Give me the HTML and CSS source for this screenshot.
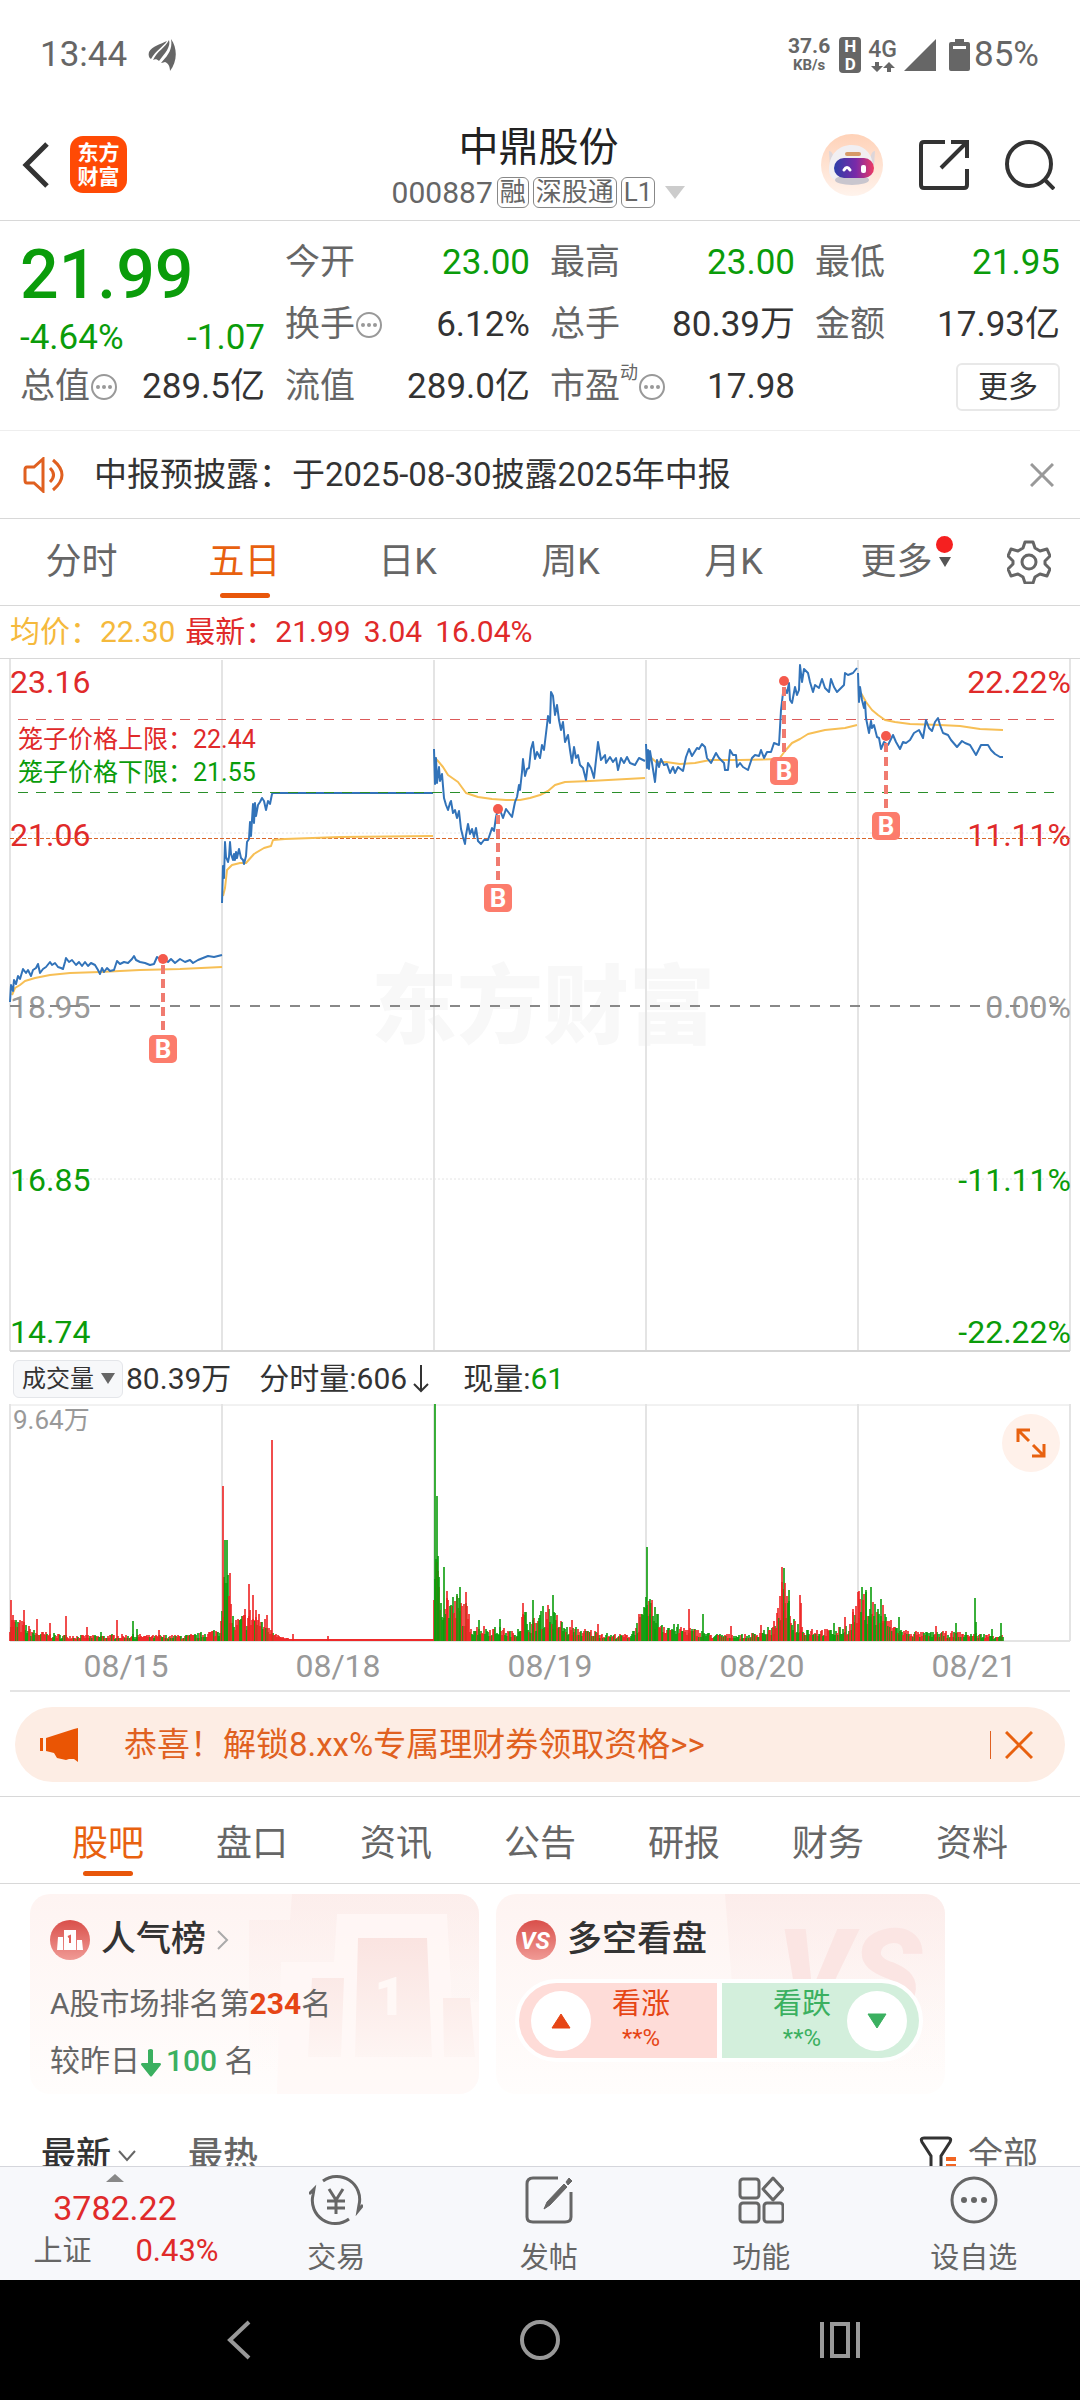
FILE: index.html
```html
<!DOCTYPE html>
<html lang="zh-CN">

<head>
    <meta charset="UTF-8">
    <meta name="viewport" content="width=device-width, initial-scale=1.0">
    <title>中鼎股份 000887</title>
    <link rel="stylesheet" href="styles.css">
</head>

<body>
    <div class="status-bar">
        <span class="clock">13:44</span>
        <svg class="status-leaf" width="30" height="34" viewBox="0 0 30 34" fill="#666">
            <path d="M2 14C5 8 14 6 20 3c-4 6-11 9-16 18C2 20 1 17 2 14z" />
            <path d="M22 2c2 7-4 13-10 21-2-2-4-2-6-1C10 13 18 10 22 2z" />
            <path d="M24 1c7 10 6 23-1 32 0-5-2-8-5-9-1 0-2 1-4 1C20 18 26 12 24 1z" />
        </svg>
        <div class="status-right">
            <div class="net-speed"><b>37.6</b><small>KB/s</small></div>
            <div class="hd"><span>H</span><span>D</span></div>
            <div class="network">
                <span>4G</span>
                <svg width="24" height="10" viewBox="0 0 24 10" fill="#666">
                    <path d="M4 0h4v4h4L6 10 0 4h4zM16 10h4V6h4l-6-6-6 6h4z" />
                </svg>
            </div>
            <svg width="32" height="32" viewBox="0 0 32 32"><path d="M32 0v32H0z" fill="#666" /></svg>
            <svg class="battery" width="21" height="32" viewBox="0 0 21 32">
                <path d="M6 0h9v3h4q2 0 2 2v25q0 2-2 2H2q-2 0-2-2V5q0-2 2-2h4z" fill="#666" />
                <path d="M4 7h13v3H4z" fill="#fff" />
            </svg>
            <span class="percent">85%</span>
        </div>
    </div>

    <header class="header">
        <div class="header-left">
            <button type="button" aria-label="返回">
                <svg width="28" height="46" viewBox="0 0 28 46" fill="none" stroke="#333" stroke-width="5">
                    <path d="M25 2L4 23l21 21" />
                </svg>
            </button>
            <a class="logo" href="#">东方<br>财富</a>
        </div>
        <div class="header-title">
            <h1>中鼎股份</h1>
            <div class="code">
                <span>000887</span><i>融</i><i>深股通</i><i>L1</i>
                <svg width="20" height="13" viewBox="0 0 20 13"><path d="M0 0h20L10 13z" fill="#ccc" /></svg>
            </div>
        </div>
        <div class="header-right">
            <button type="button" aria-label="智能助手">
                <svg width="62" height="62" viewBox="0 0 62 62">
                    <defs>
                        <linearGradient id="halo" x1="0" y1="0" x2="0" y2="1">
                            <stop offset="0" stop-color="#ffd2b8" />
                            <stop offset="1" stop-color="#fff3ec" />
                        </linearGradient>
                        <linearGradient id="visor">
                            <stop offset="0" stop-color="#2b3fa8" />
                            <stop offset=".55" stop-color="#7a2aa8" />
                            <stop offset="1" stop-color="#ee3a63" />
                        </linearGradient>
                    </defs>
                    <circle cx="31" cy="31" r="31" fill="url(#halo)" />
                    <path d="M8 17q4 0 5 9l-4 6zM54 17q-4 0-5 9l4 6z" fill="#ddd6da" />
                    <path d="M31 11c14 0 22 11 21 25 0 8-9 14-21 14S8 46 8 36c0-15 9-25 23-25z" fill="#f1eff2" />
                    <ellipse cx="31" cy="46" rx="17" ry="5" fill="#c9c6ce" />
                    <rect x="24" y="18" width="16" height="4" rx="2" fill="#d79a68" />
                    <rect x="13" y="24" width="40" height="20" rx="10" fill="url(#visor)" />
                    <path d="M23 36q3-5 6 0" fill="none" stroke="#fff" stroke-width="3" stroke-linecap="round" />
                    <rect x="40" y="31" width="5" height="8" rx="2" fill="#fff" />
                </svg>
            </button>
            <button type="button" aria-label="分享">
                <svg width="50" height="50" viewBox="0 0 50 50" fill="none" stroke="#333" stroke-width="4">
                    <path d="M26 2H5Q2 2 2 5v40q0 3 3 3h40q3 0 3-3V29M32 2h16v16M47 3L22 28" />
                </svg>
            </button>
            <button type="button" aria-label="搜索">
                <svg width="50" height="50" viewBox="0 0 50 50" fill="none" stroke="#333" stroke-width="4">
                    <circle cx="24" cy="24" r="22" />
                    <path d="M39 39l10 10" />
                </svg>
            </button>
        </div>
    </header>

    <section class="quote">
        <div class="price-block">
            <div class="price">21.99</div>
            <div class="change"><span>-4.64%</span><span>-1.07</span></div>
        </div>
        <div class="cell"><span>今开</span><b class="down">23.00</b></div>
        <div class="cell"><span>最高</span><b class="down">23.00</b></div>
        <div class="cell"><span>最低</span><b class="down">21.95</b></div>
        <div class="cell"><span>换手<svg class="tip" viewBox="0 0 28 28"><use href="#tip" /></svg></span><b>6.12%</b></div>
        <div class="cell"><span>总手</span><b>80.39万</b></div>
        <div class="cell"><span>金额</span><b>17.93亿</b></div>
        <div class="cell"><span>总值<svg class="tip" viewBox="0 0 28 28"><use href="#tip" /></svg></span><b>289.5亿</b></div>
        <div class="cell"><span>流值</span><b>289.0亿</b></div>
        <div class="cell"><span>市盈<sup>动</sup><svg class="tip" viewBox="0 0 28 28"><use href="#tip" /></svg></span><b>17.98</b></div>
        <div class="cell cell-more"><button type="button" class="more">更多</button></div>
    </section>

    <section class="notice">
        <svg width="46" height="36" viewBox="0 0 46 36" fill="none" stroke="#e06020" stroke-width="3">
            <path d="M20 2v32l-9-8H4q-2 0-2-3V13q0-3 2-3h7zM27 11q7 7 0 14M30 3q18 15 0 30" />
        </svg>
        <p>中报预披露：于2025-08-30披露2025年中报</p>
        <button type="button" aria-label="关闭">
            <svg width="24" height="24" viewBox="0 0 24 24" stroke="#999" stroke-width="3"><path d="M1 1l22 22M23 1L1 23" /></svg>
        </button>
    </section>

    <nav class="period-tabs">
        <button type="button">分时</button>
        <button type="button" class="active">五日</button>
        <button type="button">日K</button>
        <button type="button">周K</button>
        <button type="button">月K</button>
        <button type="button" class="tab-more">更多<svg width="14" height="10" viewBox="0 0 14 10"><path d="M1 0h12L7 10z" fill="#555" /></svg><span class="dot"></span></button>
        <button type="button" class="tab-setting" aria-label="设置">
            <svg width="44" height="44" viewBox="0 0 44 44" fill="none" stroke="#666" stroke-width="3" stroke-linejoin="round">
                <path d="M18 2h8l2 6 5 3 7-2 3 7-5 5v3l5 5-3 7-7-2-5 3-2 6h-8l-2-6-5-3-7 2-3-7 5-5v-3l-5-5 3-7 7 2 5-3z" />
                <circle cx="22" cy="22" r="7" />
            </svg>
        </button>
    </nav>

    <div class="legend">
        <span class="avg">均价：22.30</span>
        <span>最新：21.99</span>
        <span class="legend-num">3.04</span>
        <span class="legend-num">16.04%</span>
    </div>

    <svg class="chart" viewBox="0 0 1080 694">
        <text class="watermark" x="543" y="378" text-anchor="middle">东方财富</text>
        <!-- 网格 -->
        <g class="grid">
            <path d="M10 0V692M222 1V692M434 1V692M646 1V692M858 1V692M1070 0V692" />
            <path d="M10 692H1070" stroke="#d5d5d5" />
            <path d="M10 174H1070M10 520H1070" stroke-width="1" stroke-dasharray="2 2" />
        </g>
        <text class="up" x="10" y="34">23.16</text>
        <text class="up" x="10" y="187">21.06</text>
        <text class="flat" x="10" y="359">18.95</text>
        <text class="down" x="10" y="532">16.85</text>
        <text class="down" x="10" y="684">14.74</text>
        <g text-anchor="end">
            <text class="up" x="1071" y="34">22.22%</text>
            <text class="up" x="1071" y="187">11.11%</text>
            <text class="flat" x="1071" y="359">0.00%</text>
            <text class="down" x="1071" y="532">-11.11%</text>
            <text class="down" x="1071" y="684">-22.22%</text>
        </g>
        <path d="M10 347H1070" stroke="#888" stroke-width="2" stroke-dasharray="10 10" />
        <path d="M10 179.5H1070" stroke="#d9662a" stroke-width="1" stroke-dasharray="4 2" />
        <path d="M18 60.5H1054" stroke="#dc5a5a" stroke-width="1" stroke-dasharray="10 8" />
        <text class="cage up" x="18" y="89">笼子价格上限：22.44</text>
        <text class="cage down" x="18" y="122">笼子价格下限：21.55</text>

        <!-- 均价线 -->
        <g class="line line-avg">
            <polyline points="12,336 15,329 20,326 25,322 35,319 50,316 70,314 100,313 140,311 180,310 222,308" />
            <polyline points="223,237 225,229 227,211 232,206 240,204 246,204 254,195 264,189 271,187 273,181 285,180 340,178 433,177" />
            <polyline points="434,98 438,102 443,108 448,116 458,123 466,134 478,138 492,140 506,141 520,141 530,139 540,136 548,132 555,126 565,123 590,122 645,119" />
            <polyline points="648,96 656,103 666,103 680,105 695,104 710,101 740,101 779,100 785,92 792,84 800,80 808,75 825,71 845,69 857,66" />
            <polyline points="861,34 866,43 872,51 878,56 885,61 895,63 910,65 940,66 960,67 980,70 1003,71" />
        </g>
        <!-- 价格线 -->
        <g class="line line-price">
            <polyline points="10,343 11,326 13,332 14,321 16,325 18,317 20,320 23,310 26,314 28,311 31,317 33,311 36,309 38,305 40,314 43,310 46,308 50,303 52,306 55,304 58,308 61,309 63,310 65,303 66,299 69,303 72,301 76,306 79,303 82,307 85,303 88,307 91,304 95,306 98,311 100,315 102,309 104,313 107,309 110,312 114,311 117,302 120,305 124,303 128,304 132,300 134,297 136,301 140,303 145,304 150,306 154,305 157,298 160,300 163,300 168,303 171,300 175,304 180,300 185,303 190,301 193,304 198,301 203,299 208,297 214,298 222,296" />
            <polyline points="222,244 223,207 224,219 225,183 226,198 228,203 229,198 230,183 231,195 233,201 234,195 235,201 236,193 237,199 239,190 241,199 243,201 244,205 246,197 247,183 249,180 250,163 251,177 253,145 254,164 255,144 256,157 258,146 260,143 262,139 264,142 266,151 268,142 270,145 272,135 273,134 433,134" />
            <polyline points="434,90 435,125 436,99 437,124 439,108 440,122 442,115 444,139 446,146 448,151 450,144 451,142 453,154 455,151 457,159 459,152 461,170 463,178 465,185 466,176 468,165 470,175 472,170 474,178 476,169 478,182 481,185 484,181 488,181 490,175 492,169 494,172 496,158 498,150 500,151 503,159 506,150 509,154 512,158 515,143 517,138 519,126 520,131 522,113 523,100 525,117 527,110 529,109 531,90 533,83 535,100 537,93 540,99 542,86 544,91 547,66 548,57 550,64 551,33 553,37 555,56 557,46 559,61 561,71 563,63 565,83 568,76 570,91 572,104 574,88 576,99 578,96 580,106 583,109 586,121 588,104 591,109 594,119 596,101 598,83 601,101 605,96 606,104 610,98 613,103 616,99 618,111 621,99 624,104 627,98 630,104 635,106 639,99 645,102" />
            <polyline points="646,85 647,109 648,91 649,110 650,92 652,104 655,123 657,101 659,108 661,100 664,106 667,105 670,114 673,108 675,114 678,108 683,112 686,98 689,90 692,97 697,89 699,90 702,85 705,88 707,99 711,104 716,94 719,99 724,104 725,111 728,111 730,91 733,96 736,96 737,108 740,104 743,108 748,111 752,99 755,96 759,97 761,91 764,99 767,93 771,93 774,84 779,86 781,51 783,34 785,30 787,34 789,24 790,41 792,44 795,28 797,36 799,31 800,6 802,23 804,10 808,14 810,23 813,33 815,26 819,29 822,20 825,29 829,33 831,20 834,28 837,33 841,29 844,26 845,14 848,16 853,14 857,9" />
            <polyline points="858,14 859,43 860,28 862,41 864,49 865,43 866,59 869,74 871,62 872,69 874,66 877,78 879,79 881,90 884,83 888,86 893,76 896,83 900,90 903,83 906,84 910,81 914,74 919,71 923,79 926,61 929,69 932,72 935,63 938,59 940,66 943,74 948,76 951,81 957,88 962,82 965,84 970,86 976,96 981,86 988,86 991,91 995,95 1000,98 1003,98" />
        </g>
        <path d="M18 133.5H1054" stroke="#2a8f2a" stroke-width="1" stroke-dasharray="10 8" />

        <!-- 买点 -->
        <g class="buy">
            <path d="M163 306V376M498 156V225M784 28V98M886 84V153" />
            <circle cx="163" cy="300" r="5" />
            <circle cx="498" cy="150" r="5" />
            <circle cx="784" cy="22" r="5" />
            <circle cx="886" cy="77" r="5" />
            <rect x="149" y="376" width="28" height="28" rx="5" />
            <rect x="484" y="225" width="28" height="28" rx="5" />
            <rect x="770" y="98" width="28" height="28" rx="5" />
            <rect x="872" y="153" width="28" height="28" rx="5" />
            <text x="163" y="399">B</text>
            <text x="498" y="248">B</text>
            <text x="784" y="121">B</text>
            <text x="886" y="176">B</text>
        </g>
    </svg>

    <div class="volume-head">
        <button type="button">成交量<svg width="14" height="11" viewBox="0 0 14 11"><path d="M0 0h14L7 11z" fill="#666" /></svg></button>
        <span>80.39万</span>
        <span class="volume-item">分时量:606<svg width="18" height="28" viewBox="0 0 18 28" fill="none" stroke="#333" stroke-width="2"><path d="M9 0v26M2 19l7 7 7-7" /></svg></span>
        <span class="volume-item">现量:<b class="down">61</b></span>
    </div>

    <div class="volume-wrap">
        <svg class="chart" viewBox="0 0 1080 238">
            <g class="grid">
                <path d="M10 0V237M222 0V237M434 0V237M646 0V237M858 0V237M1070 0V237M10 237H1070" />
                <path d="M10 1H1070" stroke-width="1" />
            </g>
            <text class="volume-max" x="13" y="25">9.64万</text>
            <g id="bars"></g>
        </svg>
        <button type="button" class="expand" aria-label="放大">
            <svg width="30" height="30" viewBox="0 0 30 30" fill="none" stroke="#e8610f" stroke-width="3">
                <path d="M2 14V2h12M2 2l11 11M28 16v12H16M28 28L17 17" />
            </svg>
        </button>
    </div>
    <div class="dates"><span>08/15</span><span>08/18</span><span>08/19</span><span>08/20</span><span>08/21</span></div>
    <hr class="divider">

    <div class="banner">
        <svg width="40" height="34" viewBox="0 0 40 34" fill="#ea5504">
            <path d="M0 10h3v13H0zM6 10L34 1l4-1v34l-4-3h-5l-3 1-9-2-3-5-8-2z" />
        </svg>
        <a href="#">恭喜！解锁8.xx%专属理财券领取资格&gt;&gt;</a>
        <button type="button" aria-label="关闭">
            <svg width="28" height="28" viewBox="0 0 28 28" stroke="#e8610f" stroke-width="3"><path d="M1 1l26 26M27 1L1 27" /></svg>
        </button>
    </div>

    <nav class="info-tabs">
        <button type="button" class="active">股吧</button>
        <button type="button">盘口</button>
        <button type="button">资讯</button>
        <button type="button">公告</button>
        <button type="button">研报</button>
        <button type="button">财务</button>
        <button type="button">资料</button>
    </nav>

    <section class="cards">
        <article class="card">
            <svg class="card-bg" width="230" height="200" viewBox="0 0 230 200">
                <defs>
                    <linearGradient id="fade" x1="0" y1="0" x2="0" y2="200" gradientUnits="userSpaceOnUse">
                        <stop offset="0" stop-color="#fbe9e7" />
                        <stop offset=".9" stop-color="#fdf4f2" stop-opacity="0" />
                    </linearGradient>
                    <linearGradient id="podium" x1="0" y1="40" x2="0" y2="170" gradientUnits="userSpaceOnUse">
                        <stop offset="0" stop-color="#fae3e0" />
                        <stop offset="1" stop-color="#fef6f4" />
                    </linearGradient>
                    <linearGradient id="badge" x1="0" y1="0" x2="0" y2="1">
                        <stop offset="0" stop-color="#d94f4a" />
                        <stop offset="1" stop-color="#f09a95" />
                    </linearGradient>
                </defs>
                <path d="M0 26h41L43 0h187v180H0z" fill="url(#fade)" opacity=".6" />
                <path d="M32 68h53l3-48h110l5 88h27v92H28z" fill="#fff8f6" opacity=".8" />
                <path d="M63 84h32l-3 79H59zM109 44h69l5 119h-77zM194 104h27l5 59h-31z" fill="url(#podium)" />
                <text x="141" y="121">1</text>
            </svg>
            <h2>
                <svg width="40" height="40" viewBox="0 0 40 40">
                    <circle cx="20" cy="20" r="20" fill="url(#badge)" />
                    <path d="M8 17h5v13H7zM14 10h12v20H14zM27 20h5l1 10h-6z" fill="#fff" />
                    <path d="M18 17l2-1v7" stroke="#df5f58" stroke-width="2" fill="none" />
                </svg>
                人气榜
                <svg width="12" height="20" viewBox="0 0 12 20" fill="none" stroke="#aaa" stroke-width="2"><path d="M1 1l9 9-9 9" /></svg>
            </h2>
            <p>A股市场排名第<b class="hot">234</b>名</p>
            <p>较昨日<svg class="fall" width="22" height="28" viewBox="0 0 22 28" fill="#3bb060"><path d="M8 1q3-2 5 0v13h7q2 1 0 3l-8 10q-1 1-2 0L2 17q-2-2 0-3h6z" /></svg><b class="rank-down">100</b> 名</p>
        </article>
        <article class="card">
            <svg class="card-bg" width="220" height="200" viewBox="0 0 220 200">
                <path d="M0 0h220v180H14z" fill="url(#fade)" opacity=".7" />
                <text class="vs-bg" x="52" y="118">VS</text>
            </svg>
            <h2>
                <svg width="40" height="40" viewBox="0 0 40 40">
                    <circle cx="20" cy="20" r="20" fill="url(#badge)" />
                    <text class="vs" x="19" y="29">VS</text>
                </svg>
                多空看盘
            </h2>
            <div class="vote">
                <button type="button" class="vote-up">
                    <span class="knob"><svg width="20" height="16" viewBox="0 0 20 16"><path d="M10 1l9 14H1z" fill="#e64515" stroke="#e64515" stroke-linejoin="round" /></svg></span>
                    <span>看涨<small>**%</small></span>
                </button>
                <button type="button" class="vote-down">
                    <span>看跌<small>**%</small></span>
                    <span class="knob"><svg width="20" height="16" viewBox="0 0 20 16"><path d="M10 15L1 1h18z" fill="#3bb060" stroke="#3bb060" stroke-linejoin="round" /></svg></span>
                </button>
            </div>
        </article>
    </section>

    <div class="sort-row">
        <button type="button" class="sort-active">最新<svg width="18" height="12" viewBox="0 0 18 12" fill="none" stroke="#666" stroke-width="2"><path d="M1 1l8 9 8-9" /></svg></button>
        <button type="button" class="sort-hot">最热</button>
        <button type="button" class="filter">
            <svg width="38" height="40" viewBox="0 0 38 40" fill="none" stroke="#333" stroke-width="3">
                <path d="M12 38V20L3 6q-2-4 2-4h24q4 0 2 4l-9 14v18" />
                <path d="M27 23h10M27 30h10" stroke="#f26522" stroke-width="4" />
            </svg>全部
        </button>
    </div>

    <footer class="bottom-bar">
        <a class="index" href="#">
            <svg width="18" height="8" viewBox="0 0 18 8"><path d="M9 0l9 8H0z" fill="#888" /></svg>
            <b>3782.22</b>
            <span>上证<em>0.43%</em></span>
        </a>
        <a href="#">
            <svg width="54" height="50" viewBox="0 0 54 50" fill="none" stroke="#666" stroke-width="3">
                <path d="M14 6a23 23 0 0 1 36 24l-1 6 5-6M40 44A23 23 0 0 1 4 20l1-6-5 5M20 14l7 11 7-11M18 26h18M18 33h18M27 25v14" />
            </svg>交易
        </a>
        <a href="#">
            <svg width="50" height="50" viewBox="0 0 50 50" fill="none" stroke="#666" stroke-width="3">
                <path d="M34 3H9Q3 3 3 9v33q0 5 6 5h32q6 0 6-5V17" />
                <path d="M20 34l3-7L40 9l3 3-17 18zM42 7l3-4 3 3-4 4z" fill="#666" stroke-width="1" />
            </svg>发帖
        </a>
        <a href="#">
            <svg width="46" height="50" viewBox="0 0 46 50" fill="none" stroke="#666" stroke-width="3" stroke-linejoin="round">
                <rect x="2" y="4" width="19" height="19" rx="3" />
                <rect x="2" y="28" width="19" height="19" rx="3" />
                <rect x="26" y="28" width="19" height="19" rx="3" />
                <path d="M35 3l10 11-10 11-10-11z" />
            </svg>功能
        </a>
        <a href="#">
            <svg width="50" height="50" viewBox="0 0 50 50" fill="none" stroke="#666" stroke-width="3">
                <circle cx="25" cy="25" r="22" />
                <g fill="#666" stroke="none"><circle cx="15" cy="25" r="3" /><circle cx="25" cy="25" r="3" /><circle cx="35" cy="25" r="3" /></g>
            </svg>设自选
        </a>
    </footer>

    <nav class="system-nav">
        <button type="button" aria-label="后退"><svg width="40" height="40" viewBox="0 0 40 40"><path d="M29 2L10 20l19 18" /></svg></button>
        <button type="button" aria-label="主页"><svg width="40" height="40" viewBox="0 0 40 40"><circle cx="20" cy="20" r="18" /></svg></button>
        <button type="button" aria-label="最近任务"><svg width="40" height="40" viewBox="0 0 40 40"><path d="M2 2v36M38 2v36M12 4h16v32H12z" /></svg></button>
    </nav>

    <svg class="symbols">
        <symbol id="tip" viewBox="0 0 28 28">
            <circle cx="14" cy="14" r="12" fill="none" stroke="#999" stroke-width="2" />
            <g fill="#999"><circle cx="8" cy="14" r="2" /><circle cx="14" cy="14" r="2" /><circle cx="20" cy="14" r="2" /></g>
        </symbol>
    </svg>

    <script src="script.js"></script>
</body>

</html>
```
FILE: styles.css
```css
* {
    box-sizing: border-box;
}

body {
    margin: 0;
    font-family: Roboto, "Noto Sans CJK SC", sans-serif;
    background-color: #fff;
    color: #333;
}

h1,
h2,
p {
    margin: 0;
    font-weight: 400;
}

button {
    padding: 0;
    border: none;
    background: none;
    color: inherit;
    font: inherit;
    line-height: inherit;
    cursor: pointer;
}

button svg {
    display: block;
}

a {
    color: inherit;
    text-decoration: none;
}

b,
i,
em {
    font-weight: 400;
    font-style: normal;
}

.symbols {
    display: none;
}

.up {
    color: #e02a2a;
    fill: #e02a2a;
}

.down {
    color: #0a9c0a;
    fill: #0a9c0a;
}

.flat {
    fill: #999;
}

/* 状态栏 */
.status-bar {
    display: flex;
    align-items: center;
    height: 109px;
    padding: 0 41px 0 40px;
    font-size: 35px;
    color: #666;
}

.status-leaf {
    margin-left: 20px;
}

.status-right {
    display: flex;
    align-items: center;
    gap: 7px;
    margin-left: auto;
}

.net-speed,
.network,
.hd {
    display: flex;
    flex-direction: column;
    align-items: center;
}

.net-speed b {
    font-size: 21px;
    font-weight: 700;
    line-height: 20px;
}

.net-speed small {
    font-size: 15px;
    font-weight: 700;
    line-height: 18px;
}

.hd {
    width: 22px;
    height: 36px;
    margin-left: 2px;
    border-radius: 4px;
    background-color: #666;
    color: #fff;
    font-size: 17px;
    font-weight: 700;
    line-height: 18px;
}

.network span {
    font-size: 23px;
    font-weight: 500;
    line-height: 24px;
}

.battery {
    margin-left: 6px;
}

.percent {
    margin-left: -3px;
}

/* 标题栏 */
.header {
    display: grid;
    grid-template-columns: 1fr auto 1fr;
    align-items: center;
    height: 112px;
    padding: 0 25px 0 22px;
    border-bottom: 1px solid #d8d8d8;
}

.header-left {
    display: flex;
    align-items: center;
    gap: 20px;
}

.logo {
    width: 57px;
    height: 57px;
    padding: 5px 0;
    border-radius: 13px;
    background-color: #ff4a05;
    color: #fff;
    font-size: 21px;
    font-weight: 700;
    line-height: 24px;
    text-align: center;
}

.header-title {
    padding-top: 3px;
    text-align: center;
}

.header-title h1 {
    margin-bottom: 5px;
    color: #222;
    font-size: 40px;
    line-height: 48px;
}

.code {
    display: flex;
    align-items: center;
    gap: 4px;
    color: #666;
    font-size: 30px;
    line-height: 32px;
}

.code i {
    padding: 0 2px;
    border: 1px solid #888;
    border-radius: 6px;
    font-size: 26px;
    line-height: 29px;
}

.code svg {
    margin-left: 6px;
}

.header-right {
    display: flex;
    align-items: center;
    justify-content: flex-end;
    gap: 36px;
}

/* 行情 */
.quote {
    display: grid;
    grid-template-columns: repeat(4, 1fr);
    grid-auto-rows: 62px;
    column-gap: 20px;
    padding: 11px 20px 12px;
    border-bottom: 1px solid #eee;
    font-size: 35px;
    line-height: 46px;
}

.price-block {
    grid-row: span 2;
    padding-top: 11px;
    color: #0a9c0a;
}

.price {
    font-size: 68px;
    font-weight: 500;
    line-height: 64px;
}

.change {
    display: flex;
    justify-content: space-between;
    margin-top: 13px;
    line-height: 36px;
}

.cell {
    display: flex;
    align-items: center;
    justify-content: space-between;
    white-space: nowrap;
}

.cell > span {
    display: flex;
    align-items: center;
    color: #666;
}

.cell sup {
    align-self: flex-start;
    font-size: 18px;
    line-height: 18px;
}

.tip {
    width: 28px;
    height: 28px;
}

.cell-more {
    justify-content: flex-end;
}

.more {
    width: 104px;
    height: 48px;
    border: 2px solid #e8e8e8;
    border-radius: 6px;
    font-size: 30px;
    line-height: 40px;
}

/* 公告 */
.notice {
    display: flex;
    align-items: center;
    height: 88px;
    padding: 0 26px 0 23px;
    border-bottom: 1px solid #d8d8d8;
}

.notice p {
    flex: 1;
    margin-left: 25px;
    font-size: 33px;
    line-height: 40px;
}

/* 周期 */
.period-tabs {
    display: grid;
    grid-template-columns: repeat(6, 8fr) 5fr;
    height: 87px;
    border-bottom: 1px solid #d8d8d8;
    color: #666;
    font-size: 36px;
    line-height: 40px;
}

.period-tabs button,
.info-tabs button {
    position: relative;
}

.active {
    color: #e8610f;
}

.active::after {
    content: "";
    position: absolute;
    bottom: 7px;
    left: 50%;
    width: 50px;
    height: 5px;
    margin-left: -25px;
    border-radius: 3px;
    background-color: #e8560a;
}

.tab-more svg {
    position: absolute;
    top: 38px;
    right: 26px;
}

.dot {
    position: absolute;
    top: 17px;
    right: 25px;
    width: 17px;
    height: 17px;
    border-radius: 50%;
    background-color: #f52020;
}

.tab-setting svg {
    margin: 0 auto;
}

.legend {
    display: flex;
    align-items: center;
    gap: 10px;
    height: 53px;
    padding-left: 10px;
    border-bottom: 1px solid #d8d8d8;
    color: #e02a2a;
    font-size: 30px;
    line-height: 38px;
}

.legend .avg {
    color: #f5b93c;
}

.legend-num {
    margin-left: 3px;
}

/* 走势图 */
.chart {
    display: block;
    width: 100%;
    font-size: 32px;
}

.grid {
    fill: none;
    stroke: #e4e4e4;
    stroke-width: 2;
}

.chart .watermark {
    fill: #f8f8f8;
    font-size: 86px;
    font-weight: 900;
}

.chart .cage {
    font-size: 25px;
}

.line {
    fill: none;
    stroke-width: 2;
    stroke-linejoin: round;
}

.line-avg {
    stroke: #f7bf55;
}

.line-price {
    stroke: #3273b9;
}

.buy path {
    stroke: #f07b70;
    stroke-width: 4;
    stroke-dasharray: 9 5;
}

.buy circle {
    fill: #f4594c;
}

.buy rect {
    fill: #fc7c6c;
}

.buy text {
    fill: #fff;
    font-size: 26px;
    font-weight: 700;
    text-anchor: middle;
}

.volume-head {
    display: flex;
    align-items: center;
    height: 51px;
    padding-left: 13px;
    font-size: 30px;
    line-height: 38px;
}

.volume-head button {
    display: flex;
    align-items: center;
    gap: 7px;
    height: 38px;
    margin-right: 3px;
    padding: 0 7px 0 8px;
    border: 1px solid #e4e6ea;
    border-radius: 6px;
    background-color: #f7f8fa;
    font-size: 24px;
}

.volume-item {
    display: flex;
    align-items: center;
    margin-left: 28px;
}

.volume-item svg {
    margin: 0 5px;
}

.volume-wrap {
    position: relative;
}

.chart .volume-max {
    fill: #999;
    font-size: 26px;
}

.expand {
    position: absolute;
    top: 10px;
    right: 20px;
    width: 58px;
    height: 58px;
    border-radius: 50%;
    background-color: #fff1ea;
}

.expand svg {
    margin: 0 auto;
}

.dates {
    display: flex;
    padding-left: 20px;
    color: #999;
    font-size: 32px;
    line-height: 48px;
    text-align: center;
}

.dates span {
    flex: 1;
}

.divider {
    margin: 0 10px;
    border: none;
    border-top: 2px solid #e4e4e4;
}

/* 横幅 */
.banner {
    display: flex;
    align-items: center;
    height: 75px;
    margin: 15px 15px 14px;
    padding: 0 32px 0 25px;
    border-radius: 38px;
    background-color: #fdede4;
    color: #e06020;
    font-size: 33px;
    line-height: 40px;
}

.banner a {
    flex: 1;
    margin-left: 44px;
}

.banner button {
    padding-left: 14px;
    border-left: 1px solid #e06020;
}

.info-tabs {
    display: grid;
    grid-template-columns: repeat(7, 1fr);
    height: 88px;
    padding: 0 36px;
    border-top: 1px solid #d8d8d8;
    border-bottom: 1px solid #d8d8d8;
    color: #666;
    font-size: 36px;
}

/* 卡片 */
.cards {
    display: grid;
    grid-template-columns: 449px 449px;
    gap: 17px;
    padding: 10px 30px 0;
}

.card {
    position: relative;
    height: 200px;
    padding: 24px 20px 0;
    border-radius: 20px;
    background: linear-gradient(#fef4f2, #fffdfc);
    overflow: hidden;
    color: #666;
    font-size: 30px;
}

.card-bg {
    position: absolute;
    top: 0;
    right: 0;
}

.card-bg text {
    fill: #fff8f6;
    font-size: 54px;
    font-weight: 900;
    text-anchor: middle;
}

.card-bg .vs-bg {
    fill: #fbe5e3;
    font-size: 116px;
    font-style: italic;
    text-anchor: start;
}

.card h2,
.card p,
.vote {
    position: relative;
}

.card h2 {
    display: flex;
    align-items: center;
    gap: 11px;
    margin-bottom: 20px;
    color: #333;
    font-size: 35px;
    font-weight: 500;
    line-height: 44px;
}

.card p {
    margin-bottom: 13px;
    line-height: 44px;
}

.vs {
    fill: #fff;
    font-size: 24px;
    font-weight: 700;
    font-style: italic;
    text-anchor: middle;
}

.hot {
    color: #e64515;
    font-weight: 700;
}

.fall {
    margin-right: 4px;
    vertical-align: middle;
}

.rank-down {
    color: #3bb060;
    font-weight: 500;
}

.vote {
    display: flex;
    gap: 5px;
    width: 408px;
    margin-top: -2px;
    margin-left: -1px;
    border: 4px solid #fff;
    border-radius: 44px;
    overflow: hidden;
    background-color: #fff;
    font-size: 29px;
    line-height: 32px;
    text-align: left;
}

.card h2:has(+ .vote) {
    margin-bottom: 19px;
}

.vote button {
    display: flex;
    align-items: center;
    flex: 1;
    height: 75px;
    padding: 0 12px;
}

.vote small {
    display: block;
    margin-top: 2px;
    font-size: 24px;
}

.vote-up {
    gap: 21px;
    background-color: #fedcd8;
    color: #e64515;
}

.vote-down {
    justify-content: flex-end;
    gap: 16px;
    background-color: #d3efdc;
    color: #3bb060;
}

.knob {
    display: grid;
    place-items: center;
    width: 60px;
    height: 60px;
    border-radius: 50%;
    background-color: #fff;
}

.sort-row {
    display: flex;
    align-items: flex-start;
    height: 72px;
    padding: 38px 42px 0 41px;
    overflow: hidden;
    color: #666;
    font-size: 35px;
    line-height: 48px;
}

.sort-row button {
    display: flex;
    align-items: center;
    gap: 7px;
}

.sort-row .sort-active {
    color: #333;
    font-weight: 500;
}

.sort-row .sort-hot {
    margin-left: 52px;
    font-weight: 500;
}

.sort-row .filter {
    gap: 11px;
    margin-left: auto;
}

/* 底部 */
.bottom-bar {
    display: grid;
    grid-template-columns: 230px repeat(4, 1fr);
    height: 114px;
    border-top: 1px solid #d5d6dc;
    background-color: #f7f8fb;
    color: #666;
    font-size: 29px;
    line-height: 34px;
}

.bottom-bar a {
    display: flex;
    flex-direction: column;
    align-items: center;
    gap: 16px;
    padding-top: 8px;
}

.bottom-bar .index {
    gap: 6px;
    padding-top: 7px;
}

.index b {
    color: #e02a2a;
    font-size: 34px;
    line-height: 40px;
}

.index span {
    padding-left: 22px;
}

.index em {
    margin-left: 44px;
    color: #e02a2a;
    font-size: 31px;
}

.system-nav {
    display: flex;
    align-items: center;
    justify-content: space-between;
    height: 120px;
    padding: 0 220px;
    background-color: #000;
}

.system-nav svg {
    fill: none;
    stroke: #999;
    stroke-width: 4;
}
```
FILE: script.js
```javascript
// 成交量柱：base 为各时段平均高度，peaks 为 [x, 高度, 颜色]
const BOTTOM = 237;
const RED = '#ee2222';
const GREEN = '#0a9c0a';

const base = [
    [10, 22], [22, 18], [35, 9], [60, 6], [85, 5], [130, 6], [165, 5], [195, 6], [220, 12],
    [222, 60], [228, 55], [234, 18], [250, 28], [262, 22], [272, 14], [280, 4], [295, 1], [433, 1],
    [434, 90], [440, 50], [450, 42], [465, 36], [472, 14], [500, 12], [515, 8], [524, 28], [532, 18], [545, 32],
    [556, 24], [566, 13], [590, 10], [610, 6], [630, 6], [645, 30],
    [647, 45], [655, 28], [665, 16], [690, 12], [715, 6], [750, 6], [775, 14], [782, 50], [788, 36],
    [797, 16], [810, 12], [835, 10], [850, 16], [857, 40],
    [862, 46], [872, 38], [885, 24], [900, 11], [920, 8], [960, 8], [990, 6], [1003, 6]
];

const peaks = [
    [11, 41, RED], [13, 26, RED], [24, 31, RED], [37, 22, RED], [50, 18, RED], [66, 25, RED], [87, 14, RED],
    [101, 9, GREEN], [117, 21, RED], [133, 20, GREEN], [137, 12, GREEN], [159, 11, RED],
    [223, 155, RED], [225, 101, GREEN], [227, 101, GREEN], [230, 68, RED], [245, 32, RED], [249, 57, RED],
    [253, 46, RED], [256, 31, RED], [267, 26, RED], [272, 201, RED], [293, 7, RED], [328, 5, RED],
    [435, 237, GREEN], [437, 145, GREEN], [438, 85, GREEN], [439, 64, GREEN], [444, 74, GREEN], [447, 50, RED],
    [457, 47, GREEN], [460, 54, GREEN], [466, 49, RED], [479, 21, GREEN], [500, 22, GREEN], [523, 38, RED],
    [533, 41, GREEN], [548, 36, RED], [553, 46, GREEN], [572, 21, RED], [598, 17, RED], [639, 27, RED],
    [647, 94, GREEN], [650, 42, GREEN], [655, 34, GREEN], [689, 32, RED], [703, 27, GREEN], [731, 15, RED],
    [761, 16, RED], [774, 20, RED], [780, 45, RED], [782, 74, RED], [784, 73, GREEN], [785, 58, RED],
    [789, 51, GREEN], [800, 46, RED], [801, 38, RED], [834, 18, GREEN], [845, 24, RED], [853, 32, RED],
    [859, 50, RED], [866, 51, GREEN], [871, 54, GREEN], [881, 42, GREEN], [883, 36, RED], [899, 24, GREEN],
    [936, 15, RED], [956, 18, GREEN], [975, 43, GREEN], [976, 19, GREEN], [992, 12, GREEN], [1001, 18, GREEN]
];

let seed = 7;
function random() {
    seed = (seed * 16807) % 2147483647;
    return seed / 2147483647;
}

function baseAt(x) {
    const i = Math.max(1, base.findIndex(p => p[0] >= x));
    const [x0, h0] = base[i - 1];
    const [x1, h1] = base[i];
    return h0 + (h1 - h0) * (x - x0) / (x1 - x0);
}

const bars = document.getElementById('bars');
function addBar(x, height, color) {
    const rect = document.createElementNS('http://www.w3.org/2000/svg', 'rect');
    rect.setAttribute('x', x - 1);
    rect.setAttribute('y', BOTTOM - height);
    rect.setAttribute('width', 2);
    rect.setAttribute('height', height);
    rect.setAttribute('fill', color);
    rect.setAttribute('fill-opacity', 0.8);
    bars.appendChild(rect);
}

for (let x = 10; x <= 1003; x++) {
    const quiet = x > 273 && x < 434;
    const greenShare = x > 434 ? 0.55 : 0.35;
    const height = Math.max(2, Math.round(baseAt(x) * (0.4 + random() * 0.8)));
    addBar(x, height, !quiet && random() < greenShare ? GREEN : RED);
}
peaks.forEach(p => addBar(...p));
```
